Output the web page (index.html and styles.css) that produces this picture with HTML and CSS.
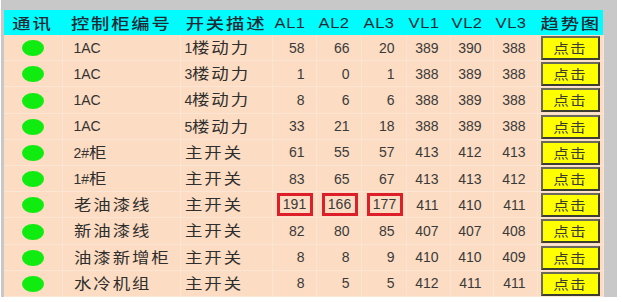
FILE: index.html
```html
<!DOCTYPE html>
<html lang="zh-CN">
<head>
<meta charset="utf-8">
<title>配电监控</title>
<link rel="stylesheet" href="styles.css">
</head>
<body>
<div class="frame">
<table class="grid">
<colgroup>
<col class="w-com"><col class="w-cab"><col class="w-desc">
<col class="w-a1"><col class="w-a2"><col class="w-a3">
<col class="w-v1"><col class="w-v2"><col class="w-v3"><col class="w-tr">
</colgroup>
<thead>
<tr>
<th><span class="hs">通讯</span></th><th><span class="hs">控制柜编号</span></th><th><span class="hs">开关描述</span></th>
<th class="h-lat"><span class="hs">AL1</span></th><th class="h-lat"><span class="hs">AL2</span></th><th class="h-lat"><span class="hs">AL3</span></th>
<th class="h-lat"><span class="hs">VL1</span></th><th class="h-lat"><span class="hs">VL2</span></th><th class="h-lat"><span class="hs">VL3</span></th>
<th class="h-tr"><span class="hs">趋势图</span></th>
</tr>
</thead>
<tbody>
<tr><td><span class="dot"></span></td><td class="txt">1AC</td><td class="txt2">1<span class="zh">楼动力</span></td><td class="num">58</td><td class="num">66</td><td class="num">20</td><td class="num">389</td><td class="num">390</td><td class="num">388</td><td class="act"><button class="btn"><span class="bt">点击</span></button></td></tr>
<tr><td><span class="dot"></span></td><td class="txt">1AC</td><td class="txt2">3<span class="zh">楼动力</span></td><td class="num">1</td><td class="num">0</td><td class="num">1</td><td class="num">388</td><td class="num">389</td><td class="num">388</td><td class="act"><button class="btn"><span class="bt">点击</span></button></td></tr>
<tr><td><span class="dot"></span></td><td class="txt">1AC</td><td class="txt2">4<span class="zh">楼动力</span></td><td class="num">8</td><td class="num">6</td><td class="num">6</td><td class="num">388</td><td class="num">389</td><td class="num">388</td><td class="act"><button class="btn"><span class="bt">点击</span></button></td></tr>
<tr><td><span class="dot"></span></td><td class="txt">1AC</td><td class="txt2">5<span class="zh">楼动力</span></td><td class="num">33</td><td class="num">21</td><td class="num">18</td><td class="num">388</td><td class="num">389</td><td class="num">388</td><td class="act"><button class="btn"><span class="bt">点击</span></button></td></tr>
<tr><td><span class="dot"></span></td><td class="txt">2#<span class="zh">柜</span></td><td class="txt2"><span class="zh">主开关</span></td><td class="num">61</td><td class="num">55</td><td class="num">57</td><td class="num">413</td><td class="num">412</td><td class="num">413</td><td class="act"><button class="btn"><span class="bt">点击</span></button></td></tr>
<tr><td><span class="dot"></span></td><td class="txt">1#<span class="zh">柜</span></td><td class="txt2"><span class="zh">主开关</span></td><td class="num">83</td><td class="num">65</td><td class="num">67</td><td class="num">413</td><td class="num">413</td><td class="num">412</td><td class="act"><button class="btn"><span class="bt">点击</span></button></td></tr>
<tr><td><span class="dot"></span></td><td class="txt"><span class="zh">老油漆线</span></td><td class="txt2"><span class="zh">主开关</span></td><td class="num hl"><span class="alarm">191</span></td><td class="num hl"><span class="alarm">166</span></td><td class="num hl"><span class="alarm">177</span></td><td class="num">411</td><td class="num">410</td><td class="num">411</td><td class="act"><button class="btn"><span class="bt">点击</span></button></td></tr>
<tr><td><span class="dot"></span></td><td class="txt"><span class="zh">新油漆线</span></td><td class="txt2"><span class="zh">主开关</span></td><td class="num">82</td><td class="num">80</td><td class="num">85</td><td class="num">407</td><td class="num">407</td><td class="num">408</td><td class="act"><button class="btn"><span class="bt">点击</span></button></td></tr>
<tr><td><span class="dot"></span></td><td class="txt"><span class="zh">油漆新增柜</span></td><td class="txt2"><span class="zh">主开关</span></td><td class="num">8</td><td class="num">8</td><td class="num">9</td><td class="num">410</td><td class="num">410</td><td class="num">409</td><td class="act"><button class="btn"><span class="bt">点击</span></button></td></tr>
<tr><td><span class="dot"></span></td><td class="txt"><span class="zh">水冷机组</span></td><td class="txt2"><span class="zh">主开关</span></td><td class="num">8</td><td class="num">5</td><td class="num">5</td><td class="num">412</td><td class="num">411</td><td class="num">411</td><td class="act"><button class="btn"><span class="bt">点击</span></button></td></tr>
</tbody>
</table>
</div>
</body>
</html>
```

FILE: styles.css
```css
html, body {
  margin: 0;
  padding: 0;
  background: #ffffff;
}

.frame {
  width: 616px;
  box-sizing: border-box;
  margin-left: 1px;
  padding: 10px 14px 0 3px;
  background: #c8c8c8;
}

.grid {
  width: 599px;
  table-layout: fixed;
  border-collapse: collapse;
  font-family: "Liberation Sans", "Noto Sans CJK SC", sans-serif;
  color: #333333;
}

.w-com { width: 58px; }
.w-cab { width: 118px; }
.w-desc { width: 92px; }
.w-a1 { width: 44px; }
.w-a2 { width: 45px; }
.w-a3 { width: 45px; }
.w-v1 { width: 44px; }
.w-v2 { width: 43px; }
.w-v3 { width: 44px; }
.w-tr { width: 66px; }

.grid thead th {
  height: 25px;
  padding: 0;
  background: #00fcfc;
  color: #1c2a36;
  font-family: "Noto Sans CJK SC", sans-serif;
  font-size: 15px;
  line-height: 18px;
  font-weight: 500;
  white-space: nowrap;
  text-align: center;
}

.hs {
  display: inline-block;
  letter-spacing: 1.5px;
  transform: scaleX(1.22);
  transform-origin: center;
}

.h-lat {
  padding-right: 8px !important;
}

.h-lat .hs {
  font-family: "Liberation Sans", sans-serif;
  font-size: 15px;
  letter-spacing: 0.5px;
  transform: scaleX(1.1);
}

.h-tr {
  padding-left: 2px !important;
}

.grid tbody td {
  height: 25.2px;
  padding: 0;
  background: #fcdcc2;
  border-bottom: 1px solid #fbe6d6;
  border-right: 1px solid #fbe4d2;
  font-size: 14px;
  line-height: 16px;
  white-space: nowrap;
  vertical-align: middle;
}

.grid tbody td:first-child {
  text-align: center;
}

.dot {
  display: inline-block;
  width: 22px;
  height: 16px;
  border-radius: 50%;
  background: #10ec10;
  vertical-align: middle;
}

.txt {
  padding-left: 11px !important;
}

.txt2 {
  padding-left: 4px !important;
}

.zh {
  display: inline-block;
  font-family: "Noto Sans CJK SC", sans-serif;
  font-size: 14.5px;
  letter-spacing: 1.6px;
  transform: scaleX(1.2);
  transform-origin: left center;
  color: #2e2e2e;
}

.num {
  text-align: right;
  font-size: 13px;
  color: #3a3a3a;
  padding-right: 11px !important;
}

.num.hl {
  padding-right: 3px !important;
}

.alarm {
  display: inline-block;
  box-sizing: border-box;
  width: 36px;
  height: 23px;
  line-height: 17px;
  border: 3px solid #dc1f28;
  text-align: center;
  vertical-align: middle;
}

.act {
  padding-left: 3px !important;
}

.btn {
  display: block;
  box-sizing: border-box;
  width: 59px;
  height: 24px;
  margin: 1px 0 0 0;
  padding: 0;
  background: #ffff00;
  border: 2px solid;
  border-color: #6a6a5a #3e3e30 #3e3e30 #6a6a5a;
  font-family: "Noto Sans CJK SC", sans-serif;
  font-size: 13px;
  line-height: 18px;
  color: #3c3c2c;
  text-align: center;
}

.bt {
  display: inline-block;
  letter-spacing: 1px;
  text-indent: 1px;
  transform: scaleX(1.2);
}
```
